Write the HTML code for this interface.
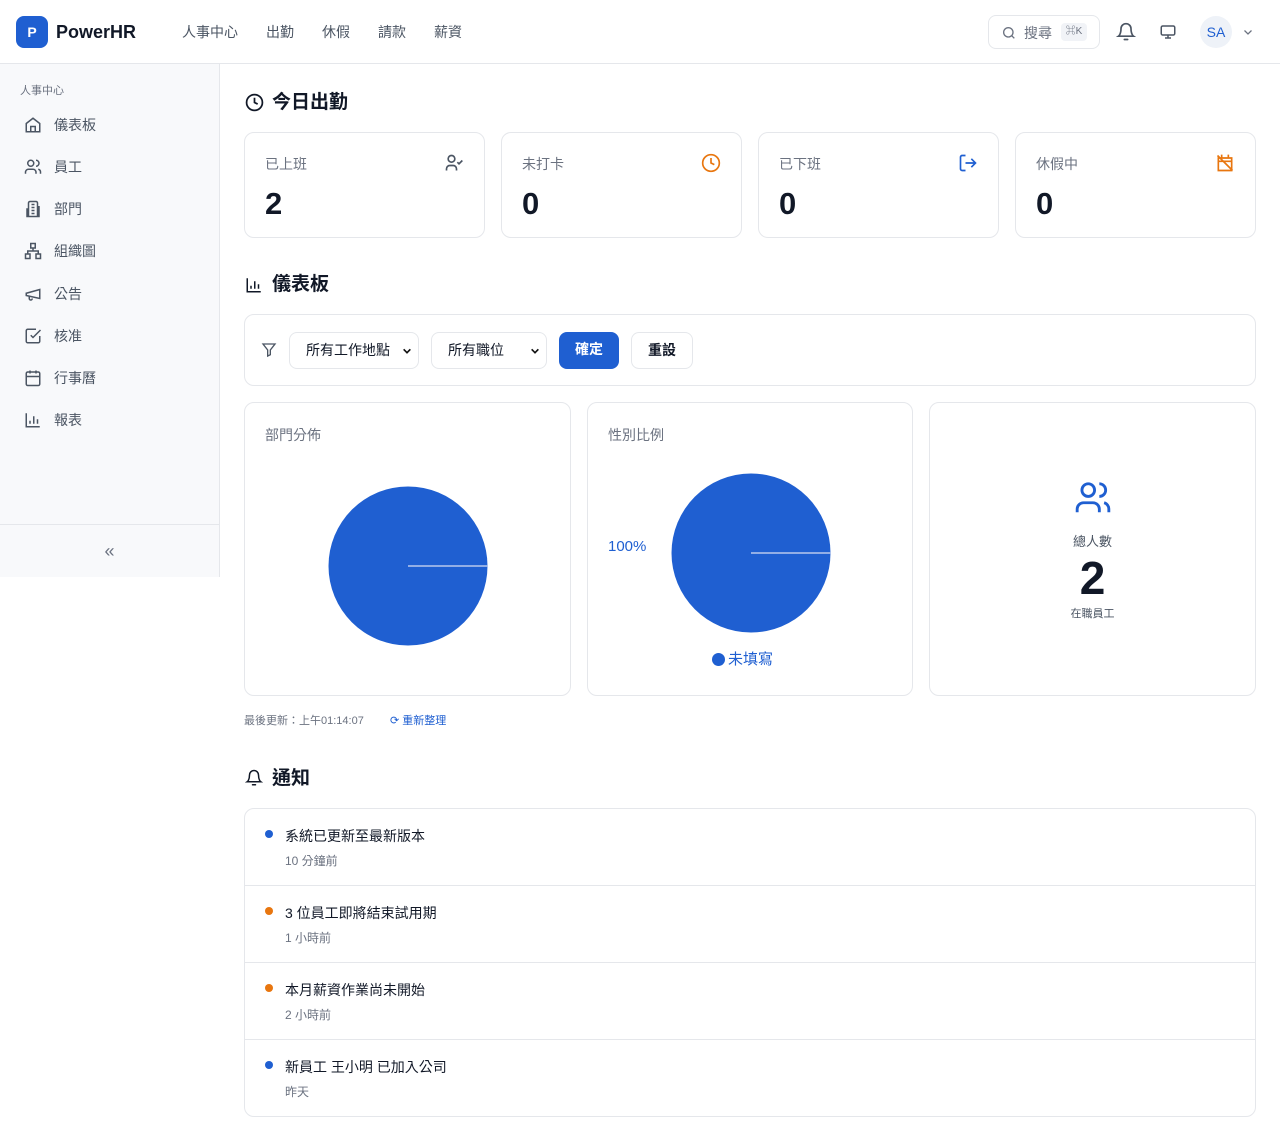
<!DOCTYPE html>
<html><head><meta charset="utf-8"><style>
*{box-sizing:border-box;margin:0;padding:0}
body{width:1280px;height:1141px;background:#fff;font-family:"Liberation Sans","Noto Sans CJK TC",sans-serif;color:#111827;position:relative;overflow:hidden}
.hdr{position:absolute;left:0;top:0;width:1280px;height:64px;border-bottom:1px solid #e5e7eb;background:#fff}
.logo{position:absolute;left:16px;top:16px;width:32px;height:32px;border-radius:8px;background:#1f5fd1;color:#fff;font-weight:bold;font-size:14px;text-align:center;line-height:32px}
.brand{position:absolute;left:56px;top:20px;font-size:18px;font-weight:bold;line-height:24px}
.nav{position:absolute;top:22px;font-size:14px;color:#4b5563;line-height:20px}
.search{position:absolute;left:988px;top:15px;width:112px;height:34px;border:1px solid #e5e7eb;border-radius:8px}
.side{position:absolute;left:0;top:64px;width:220px;height:513px;background:#f8f9fb;border-right:1px solid #e5e7eb}
.side .lbl{position:absolute;left:20px;top:18px;font-size:11px;color:#6b7280}
.si{position:absolute;left:24px;font-size:14px;color:#4b5563;height:20px;line-height:20px}
.si svg{position:absolute;left:0;top:1px}
.si span{position:absolute;left:30px;white-space:nowrap}
.collapse{position:absolute;left:0;top:460px;width:219px;border-top:1px solid #e5e7eb;height:53px;text-align:center;line-height:52px;color:#6b7280;font-size:18px}
h2{position:absolute;font-size:19px;font-weight:bold;line-height:24px}
.card{position:absolute;border:1px solid #e5e7eb;border-radius:10px;background:#fff}
.st{top:132px;width:241px;height:106px}
.st .t{position:absolute;left:20px;top:21px;font-size:14px;color:#6b7280}
.st .n{position:absolute;left:20px;top:53px;font-size:31px;font-weight:bold}
.st svg{position:absolute;right:20px;top:20px}
.sel{position:absolute;top:332px;height:37px;border:1px solid #e5e7eb;border-radius:8px;font-size:14px;line-height:35px;padding-left:16px}
.sel svg{position:absolute;right:6px;top:13px}
.btn{position:absolute;top:332px;height:37px;border-radius:8px;font-size:14px;line-height:35px;text-align:center;font-weight:bold}
.ch{top:402px;width:327px;height:294px}
.ch .t{position:absolute;left:20px;top:22px;font-size:14px;color:#6b7280}
.row{position:absolute;left:0;width:1010px;height:77px;border-bottom:1px solid #e5e7eb}
.row .d{position:absolute;left:20px;top:21px;width:8px;height:8px;border-radius:50%}
.row .a{position:absolute;left:40px;top:17px;font-size:14px}
.row .b{position:absolute;left:40px;top:43px;font-size:12px;color:#6b7280}
</style></head><body>
<div class="hdr">
<div class="logo">P</div><div class="brand">PowerHR</div>
<div class="nav" style="left:182px">人事中心</div>
<div class="nav" style="left:266px">出勤</div>
<div class="nav" style="left:322px">休假</div>
<div class="nav" style="left:378px">請款</div>
<div class="nav" style="left:434px">薪資</div>
<div class="search">
<svg style="position:absolute;left:12px;top:9px" width="16" height="16" viewBox="0 0 24 24" fill="none" stroke="#6b7280" stroke-width="2"><circle cx="11" cy="11" r="7"/><path d="M20 20l-4-4"/></svg>
<span style="position:absolute;left:35px;top:7px;font-size:14px;color:#6b7280">搜尋</span>
<span style="position:absolute;left:72px;top:7px;width:26px;height:18px;background:#f1f3f7;border-radius:4px;font-size:10px;color:#6b7280;text-align:center;line-height:18px">⌘K</span>
</div>
<svg style="position:absolute;left:1116px;top:22px" width="20" height="20" viewBox="0 0 24 24" fill="none" stroke="#4b5563" stroke-width="2" stroke-linecap="round"><path d="M6 8a6 6 0 0112 0c0 7 3 9 3 9H3s3-2 3-9M10 21h4"/></svg>
<svg style="position:absolute;left:1159px;top:23px" width="18" height="18" viewBox="0 0 24 24" fill="none" stroke="#4b5563" stroke-width="2"><rect x="3" y="4" width="18" height="12" rx="2"/><path d="M12 16v4M8 20h8"/></svg>
<div style="position:absolute;left:1200px;top:16px;width:32px;height:32px;border-radius:50%;background:#eef2f8;color:#1f5fd1;font-size:14px;text-align:center;line-height:32px">SA</div>
<svg style="position:absolute;left:1242px;top:26px" width="12" height="12" viewBox="0 0 24 24" fill="none" stroke="#6b7280" stroke-width="2.5"><path d="M5 9l7 7 7-7"/></svg>
</div>

<div class="side">
<div class="lbl">人事中心</div>
<div class="si" style="top:51px"><svg width="18" height="18" viewBox="0 0 24 24" fill="none" stroke="#4b5563" stroke-width="2"><path d="M3 10l9-7 9 7v11H3z M9 21v-7h6v7"/></svg><span>儀表板</span></div>
<div class="si" style="top:93px"><svg width="18" height="18" viewBox="0 0 24 24" fill="none" stroke="#4b5563" stroke-width="2"><circle cx="9" cy="7" r="4"/><path d="M2 21v-2a4 4 0 014-4h6a4 4 0 014 4v2M16 3a4 4 0 010 8M22 21v-2a4 4 0 00-3-4"/></svg><span>員工</span></div>
<div class="si" style="top:135px"><svg width="18" height="18" viewBox="0 0 24 24" fill="none" stroke="#4b5563" stroke-width="2"><path d="M6 22V4a2 2 0 012-2h8a2 2 0 012 2v18zM6 12H4v10h2M18 9h2v13h-2M10 6h4M10 10h4M10 14h4M10 18h4"/></svg><span>部門</span></div>
<div class="si" style="top:177px"><svg width="18" height="18" viewBox="0 0 24 24" fill="none" stroke="#4b5563" stroke-width="2"><rect x="9" y="2" width="6" height="6"/><rect x="2" y="16" width="6" height="6"/><rect x="16" y="16" width="6" height="6"/><path d="M5 16v-4h14v4M12 8v4"/></svg><span>組織圖</span></div>
<div class="si" style="top:220px"><svg width="18" height="18" viewBox="0 0 24 24" fill="none" stroke="#4b5563" stroke-width="2"><path d="M3 11l18-5v12L3 14zM7 15v3a2 2 0 004 0"/></svg><span>公告</span></div>
<div class="si" style="top:262px"><svg width="18" height="18" viewBox="0 0 24 24" fill="none" stroke="#4b5563" stroke-width="2"><path d="M21 12v7a2 2 0 01-2 2H5a2 2 0 01-2-2V5a2 2 0 012-2h11M9 11l3 3L22 4"/></svg><span>核准</span></div>
<div class="si" style="top:304px"><svg width="18" height="18" viewBox="0 0 24 24" fill="none" stroke="#4b5563" stroke-width="2"><rect x="3" y="4" width="18" height="18" rx="2"/><path d="M16 2v4M8 2v4M3 10h18"/></svg><span>行事曆</span></div>
<div class="si" style="top:346px"><svg width="18" height="18" viewBox="0 0 24 24" fill="none" stroke="#4b5563" stroke-width="2"><path d="M3 3v18h18M8 17v-4M13 17V7M18 17v-6"/></svg><span>報表</span></div>
<div class="collapse">«</div>
</div>

<svg style="position:absolute;left:245px;top:93px" width="19" height="19" viewBox="0 0 24 24" fill="none" stroke="#111827" stroke-width="2.2"><circle cx="12" cy="12" r="10"/><path d="M12 6v6l4 2"/></svg>
<h2 style="left:272px;top:91px">今日出勤</h2>

<div class="card st" style="left:244px"><div class="t">已上班</div><div class="n">2</div><svg width="20" height="20" viewBox="0 0 24 24" fill="none" stroke="#4b5563" stroke-width="2"><circle cx="9" cy="7" r="4"/><path d="M3 21v-2a4 4 0 014-4h4a4 4 0 014 4v2M16 11l2 2 4-4"/></svg></div>
<div class="card st" style="left:501px"><div class="t">未打卡</div><div class="n">0</div><svg width="20" height="20" viewBox="0 0 24 24" fill="none" stroke="#e8760f" stroke-width="2"><circle cx="12" cy="12" r="10"/><path d="M12 6v6l4 2"/></svg></div>
<div class="card st" style="left:758px"><div class="t">已下班</div><div class="n">0</div><svg width="20" height="20" viewBox="0 0 24 24" fill="none" stroke="#1f5fd1" stroke-width="2"><path d="M9 21H5a2 2 0 01-2-2V5a2 2 0 012-2h4M16 17l5-5-5-5M21 12H9"/></svg></div>
<div class="card st" style="left:1015px"><div class="t">休假中</div><div class="n">0</div><svg width="20" height="20" viewBox="0 0 24 24" fill="none" stroke="#e8760f" stroke-width="2"><path d="M4 6h16v15H4zM8 2v4M16 2v4M4 10h16M3 3l18 18"/></svg></div>

<svg style="position:absolute;left:245px;top:276px" width="18" height="18" viewBox="0 0 24 24" fill="none" stroke="#111827" stroke-width="2"><path d="M3 3v18h18M8 17v-4M13 17V7M18 17v-6"/></svg>
<h2 style="left:272px;top:273px">儀表板</h2>

<div class="card" style="left:244px;top:314px;width:1012px;height:72px"></div>
<svg style="position:absolute;left:261px;top:342px" width="16" height="16" viewBox="0 0 24 24" fill="none" stroke="#4b5563" stroke-width="2"><path d="M3 3h18l-7 9v7l-4 2v-9z"/></svg>
<div class="sel" style="left:289px;width:130px">所有工作地點<svg width="10" height="10" viewBox="0 0 24 24" fill="none" stroke="#111" stroke-width="4"><path d="M4 8l8 8 8-8"/></svg></div>
<div class="sel" style="left:431px;width:116px">所有職位<svg width="10" height="10" viewBox="0 0 24 24" fill="none" stroke="#111" stroke-width="4"><path d="M4 8l8 8 8-8"/></svg></div>
<div class="btn" style="left:559px;width:60px;background:#1f5fd1;color:#fff">確定</div>
<div class="btn" style="left:631px;width:62px;border:1px solid #e5e7eb">重設</div>

<div class="card ch" style="left:244px"><div class="t">部門分佈</div>
<svg style="position:absolute;left:83px;top:83px" width="160" height="160"><circle cx="80" cy="80" r="79.5" fill="#1f5fd1"/><line x1="80" y1="80" x2="160" y2="80" stroke="#b9c9ee" stroke-width="1.5"/></svg></div>
<div class="card ch" style="left:587px;width:326px"><div class="t">性別比例</div>
<div style="position:absolute;left:20px;top:135px;color:#1f5fd1;font-size:15px">100%</div>
<svg style="position:absolute;left:83px;top:70px" width="160" height="160"><circle cx="80" cy="80" r="79.5" fill="#1f5fd1"/><line x1="80" y1="80" x2="160" y2="80" stroke="#b9c9ee" stroke-width="1.5"/></svg>
<div style="position:absolute;left:124px;top:245px;color:#1f5fd1;font-size:15px"><span style="display:inline-block;width:13px;height:13px;border-radius:50%;background:#1f5fd1;vertical-align:-2px;margin-right:3px"></span>未填寫</div></div>
<div class="card ch" style="left:929px"><svg style="position:absolute;left:144px;top:76px" width="38" height="38" viewBox="0 0 24 24" fill="none" stroke="#1f5fd1" stroke-width="1.8"><circle cx="9" cy="7" r="4"/><path d="M2 21v-2a4 4 0 014-4h6a4 4 0 014 4v2M16 3a4 4 0 010 8M22 21v-2a4 4 0 00-3-4"/></svg>
<div style="position:absolute;left:0;width:325px;text-align:center;top:128px;font-size:13px;color:#4b5563">總人數</div>
<div style="position:absolute;left:0;width:325px;text-align:center;top:148px;font-size:46px;font-weight:bold;line-height:54px">2</div>
<div style="position:absolute;left:0;width:325px;text-align:center;top:202px;font-size:11px;color:#4b5563">在職員工</div></div>

<div style="position:absolute;left:244px;top:712px;font-size:11px;color:#6b7280">最後更新：上午01:14:07</div>
<div style="position:absolute;left:390px;top:712px;font-size:11px;color:#1f5fd1">⟳ 重新整理</div>

<svg style="position:absolute;left:245px;top:769px" width="18" height="18" viewBox="0 0 24 24" fill="none" stroke="#111827" stroke-width="2" stroke-linecap="round"><path d="M6 8a6 6 0 0112 0c0 7 3 9 3 9H3s3-2 3-9M10 21h4"/></svg>
<h2 style="left:272px;top:767px">通知</h2>

<div class="card" style="left:244px;top:808px;width:1012px;height:309px;overflow:hidden">
<div class="row" style="top:0"><div class="d" style="background:#1f5fd1"></div><div class="a">系統已更新至最新版本</div><div class="b">10 分鐘前</div></div>
<div class="row" style="top:77px"><div class="d" style="background:#e8760f"></div><div class="a">3 位員工即將結束試用期</div><div class="b">1 小時前</div></div>
<div class="row" style="top:154px"><div class="d" style="background:#e8760f"></div><div class="a">本月薪資作業尚未開始</div><div class="b">2 小時前</div></div>
<div class="row" style="top:231px;border:0"><div class="d" style="background:#1f5fd1"></div><div class="a">新員工 王小明 已加入公司</div><div class="b">昨天</div></div>
</div>
</body></html>
